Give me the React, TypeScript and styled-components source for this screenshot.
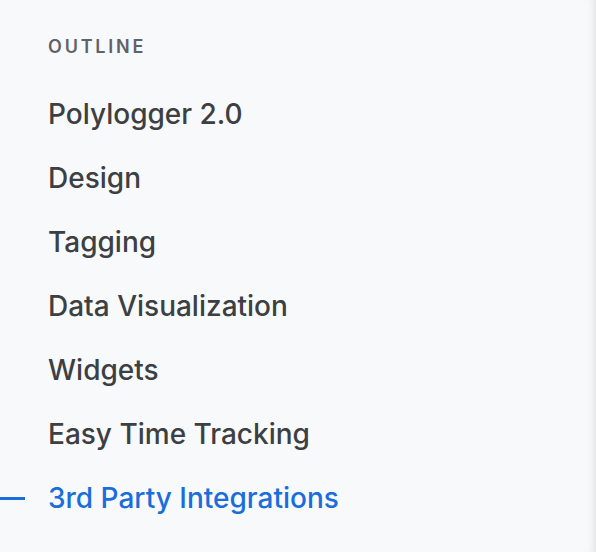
import React, { FC } from "react";
import styled, { createGlobalStyle } from "styled-components";

const items = [
  "Polylogger 2.0",
  "Design",
  "Tagging",
  "Data Visualization",
  "Widgets",
  "Easy Time Tracking",
  "3rd Party Integrations",
];

const ACTIVE = 6;

const App: FC = () => {
  return (
    <>
      <GlobalStyle />
      <Sidebar>
        <Heading>OUTLINE</Heading>
        <List>
          {items.map((label, i) => (
            <Item key={label} $active={i === ACTIVE}>
              {label}
            </Item>
          ))}
        </List>
      </Sidebar>
    </>
  );
};

const GlobalStyle = createGlobalStyle`
  html, body {
    margin: 0;
    padding: 0;
    background: #f8f9fb;
  }
`;

const Sidebar = styled.nav`
  box-sizing: border-box;
  width: 596px;
  height: 552px;
  padding: 35px 0 0 48px;
  background: #f8f9fb;
  box-shadow: inset -7px 0 7px -5px rgba(60, 64, 67, 0.12);
  font-family: Inter, "Noto Sans", sans-serif;
`;

const Heading = styled.div`
  font-size: 18px;
  line-height: 24px;
  font-weight: 600;
  letter-spacing: 2.8px;
  color: #5f6368;
`;

const List = styled.ul`
  list-style: none;
  margin: 0;
  padding: 23px 0 0;
`;

const Item = styled.li<{ $active?: boolean }>`
  position: relative;
  height: 64px;
  line-height: 64px;
  font-size: 28px;
  font-weight: 500;
  color: ${(p) => (p.$active ? "#1a6ddb" : "#3c4043")};

  &::before {
    content: "";
    display: ${(p) => (p.$active ? "block" : "none")};
    position: absolute;
    left: -48px;
    top: 31px;
    width: 25px;
    height: 3px;
    background: #1a6ddb;
  }
`;

export default App;
